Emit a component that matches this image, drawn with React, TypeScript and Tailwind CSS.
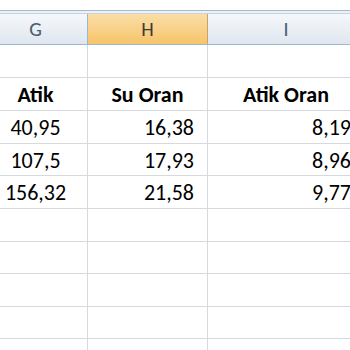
const rowHeights = [33, 33, 33, 32, 33, 33, 32, 33, 32, 33];

const rows: { g: string; h: string; i: string; bold?: boolean }[] = [
  { g: '', h: '', i: '' },
  { g: 'Atik', h: 'Su Oran', i: 'Atik Oran', bold: true },
  { g: '40,95', h: '16,38', i: '8,19' },
  { g: '107,5', h: '17,93', i: '8,96' },
  { g: '156,32', h: '21,58', i: '9,77' },
];

const font = { fontFamily: 'Carlito, Lato, "Open Sans", sans-serif' };

export default function App() {
  return (
    <div className="w-[350px] h-[350px] overflow-hidden bg-white text-black" style={font}>
      <div className="h-[10px] bg-white" />
      <div className="h-px bg-[#a7b9cd]" />
      <div className="h-[2px] bg-[#eef2f7]" />
      <div className="h-px bg-[#c6d2de]" />
      {/* column headers */}
      <div className="-ml-[16px] grid grid-cols-[104px_120px_156px] h-[31px] border-b border-[#9eb6ce]">
        <div className="flex items-center justify-center bg-gradient-to-b from-[#f5f8fb] to-[#dfe6ee] border-r border-[#9eb6ce] text-[20px] text-[#4a5a70]">
          G
        </div>
        <div className="flex items-center justify-center bg-gradient-to-b from-[#fbdea6] to-[#f6c469] border-r border-[#c9a46a] text-[20px] text-[#3c3c3c]">
          H
        </div>
        <div className="flex items-center justify-center bg-gradient-to-b from-[#f5f8fb] to-[#dfe6ee] text-[20px] text-[#4a5a70]">
          I
        </div>
      </div>
      {rowHeights.map((h, idx) => {
        const r = rows[idx];
        return (
          <div
            key={idx}
            className="-ml-[16px] grid grid-cols-[104px_120px_156px] border-b border-[#d5d9e0] text-[22px] leading-none"
            style={{ height: h }}
          >
            <div className={`flex items-center justify-center border-r border-[#d5d9e0] pt-[2px] ${r?.bold ? 'font-bold' : ''}`}>
              {r?.g}
            </div>
            <div
              className={`flex items-center border-r border-[#d5d9e0] pt-[2px] ${
                r?.bold ? 'font-bold justify-center' : 'justify-end pr-[13px]'
              }`}
            >
              {r?.h}
            </div>
            <div
              className={`flex items-center pt-[2px] ${r?.bold ? 'font-bold justify-center' : 'justify-end pr-[13px]'}`}
            >
              {r?.i}
            </div>
          </div>
        );
      })}
    </div>
  );
}
